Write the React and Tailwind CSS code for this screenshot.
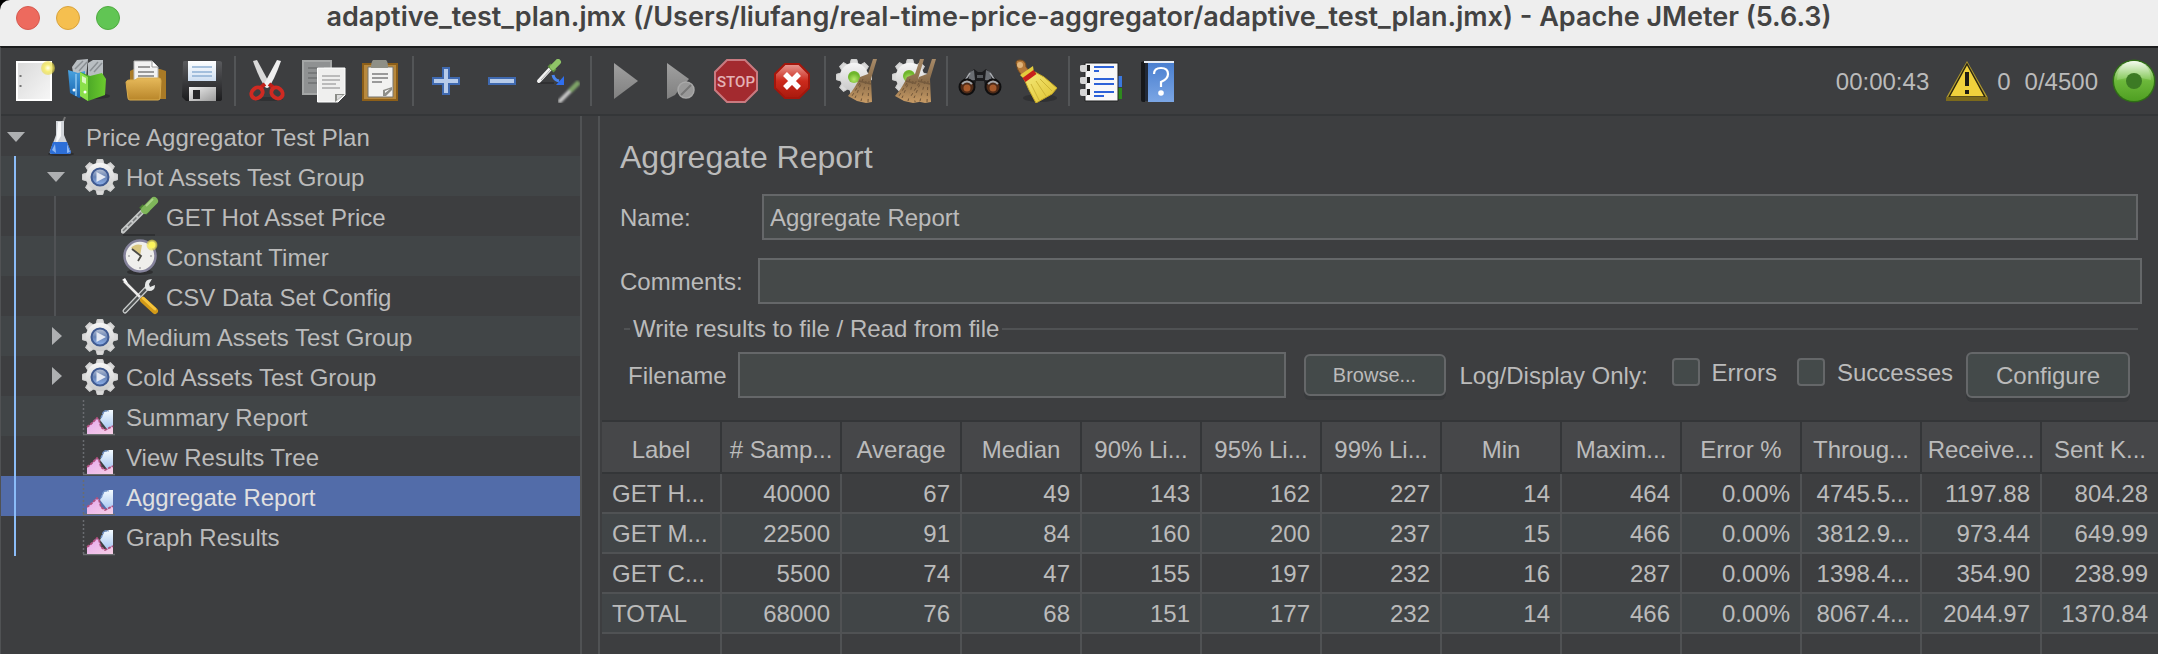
import React from "react";

const TEETH = [0, 45, 90, 135, 180, 225, 270, 315];

function Gradient({ id, from, to, mid, x2 = 0, y2 = 1 }) {
  return (
    <linearGradient id={id} x1="0" y1="0" x2={x2} y2={y2}>
      <stop offset="0" stopColor={from} />
      {mid && <stop offset="0.5" stopColor={mid} />}
      <stop offset="1" stopColor={to} />
    </linearGradient>
  );
}

function SharedGradients() {
  return (
    <svg width="0" height="0" className="absolute" aria-hidden="true">
      <defs>
        <Gradient id="paper" from="#dadada" to="#f6f6f6" x2={1} />
        <Gradient id="gear" from="#f6f6f6" to="#c9c9c9" />
        <Gradient id="blueFolder" from="#4aa3e0" to="#1763ae" />
        <Gradient id="greenFolder" from="#3f9a24" to="#6ccb2e" x2={1} y2={0} />
        <Gradient id="yellowFolder" from="#e6b95a" to="#b9862a" />
        <Gradient id="label" from="#ffffff" to="#cfdff2" />
        <Gradient id="metal" from="#f0f0f0" to="#9a9a9a" x2={1} />
        <Gradient id="disk" from="#5a5b5e" to="#1c1c1e" />
        <Gradient id="redGloss" from="#e89a93" mid="#cc2a1c" to="#a81a0e" />
        <Gradient id="straw" from="#a78a68" mid="#8a6c49" to="#c99c66" />
        <Gradient id="yellowStraw" from="#f4ea7a" to="#e0c22e" x2={1} />
        <Gradient id="playGrey" from="#a0a0a0" to="#808080" />
        <Gradient id="book" from="#4a7fd0" to="#7ba6e4" />
        <Gradient id="orb" from="#dff2d0" mid="#6cb83a" to="#4f9f22" />
        <Gradient id="shine" from="#f4fbef" to="#86c95a" />
        <Gradient id="peak" from="#e6a9ee" to="#f6cfe6" x2={1} />
        <Gradient id="peakBlue" from="#f4fbff" to="#a9c8f2" />
        <Gradient id="blueDot" from="#b9c2d4" mid="#6783b4" to="#8fb2ee" />
        <radialGradient id="star">
          <stop offset="0" stopColor="#fffff0" />
          <stop offset="0.5" stopColor="#f6ee7a" />
          <stop offset="1" stopColor="#e8d83a" stopOpacity="0.5" />
        </radialGradient>
        <radialGradient id="greenDot" cy="0.7">
          <stop offset="0" stopColor="#b6e86a" />
          <stop offset="1" stopColor="#6fb62c" />
        </radialGradient>
        <filter id="soft">
          <feGaussianBlur stdDeviation="1" />
        </filter>
      </defs>
    </svg>
  );
}

function Svg({ size = 44, children }) {
  return (
    <svg width={size} height={size} viewBox={`0 0 ${size} ${size}`} fill="none" aria-hidden="true" className="shrink-0">
      {children}
    </svg>
  );
}

function GearShape({ cx, cy, r }) {
  return (
    <g>
      {TEETH.map((a) => (
        <path
          key={a}
          d={`M${cx - r * 0.26} ${cy - r * 0.6}L${cx - r * 0.16} ${cy - r}H${cx + r * 0.16}L${cx + r * 0.26} ${cy - r * 0.6}Z`}
          transform={`rotate(${a} ${cx} ${cy})`}
          fill="#dadada"
          stroke="#cfcfcf"
          strokeWidth="1"
        />
      ))}
      <circle cx={cx} cy={cy} r={r * 0.81} fill="url(#gear)" />
    </g>
  );
}

function NewIcon() {
  return (
    <Svg>
      <path d="M4 2H40V42H4Z" fill="#fff" />
      <path d="M6 4H38V40H6Z" fill="url(#paper)" />
      <path d="M8.500 16v2M8.500 26v2" stroke="#777" strokeWidth="2" />
      <circle cx="36" cy="9" r="7" fill="url(#star)" />
    </Svg>
  );
}

function TemplatesIcon() {
  return (
    <Svg>
      <ellipse cx="28" cy="37" rx="14" ry="3" fill="#2e2f31" />
      <path d="M4 8L9 1L20 0L18 18L6 18ZM20 4L25 1H35V16L20 18Z" fill="#b9bec2" />
      <path d="M7 10l8-8M11 12l8-9M22 12l8-9M26 13l8-9" stroke="#8b9094" strokeWidth="1.500" />
      <path d="M0 11L10 14L17 12V36L11 39L2 34Z" fill="url(#blueFolder)" />
      <path d="M8 15V37" stroke="#8cc6f0" strokeWidth="1.500" />
      <path d="M12 13L22 17L34 14L38 20L37 36L20 42L12 37Z" fill="url(#greenFolder)" />
      <path d="M12 13L20 18V42L12 37Z" fill="#8be04a" />
      <path d="M14 17l4 2v6l-4-2Z" fill="#d9f7c0" />
      <circle cx="17" cy="33" r="1.500" fill="#fff" />
      <circle cx="6" cy="31" r="1.500" fill="#fff" />
    </Svg>
  );
}

function OpenIcon() {
  return (
    <Svg>
      <path d="M6 12L10 10H36L42 12V40H6Z" fill="#a97a26" />
      <path d="M10 2H28L34 8V26H10Z" fill="#f2f2f2" stroke="#b5b5b5" />
      <path d="M28 2V8H34" stroke="#999" fill="#fff" />
      <path d="M14 8H26M14 13H30M14 17H30" stroke="#9a9a9a" strokeWidth="2" />
      <path d="M2 23Q3 21 5 21H11L14 19H35Q37 19 37 22L36 39Q36 41 34 41H6Q4 41 4 39Z" fill="url(#yellowFolder)" stroke="#d9ac4e" />
    </Svg>
  );
}

function SaveIcon() {
  return (
    <Svg>
      <path d="M3 3Q3 2 5 2H39Q42 2 42 4V40Q42 42 39 42H6L2 38Z" fill="url(#disk)" />
      <path d="M8 2H36V22H8Z" fill="url(#label)" />
      <path d="M12 8H32M12 13H32M12 17H32" stroke="#8fb0d4" strokeWidth="1.500" />
      <path d="M9 28H36V42H9Z" fill="url(#metal)" />
      <path d="M13 31H20V40H13Z" fill="#28282a" />
    </Svg>
  );
}

function CutIcon() {
  return (
    <Svg>
      <ellipse cx="22" cy="40" rx="15" ry="2" fill="#303133" />
      <path d="M7 2L11 1L25 27L20 29Q14 22 7 2Z" fill="#d9d9d9" />
      <path d="M35 2L31 1L17 27L22 29Q28 22 35 2Z" fill="#efefef" />
      <path d="M19 25L14 29M23 25L28 29" stroke="#c01f18" strokeWidth="4" />
      <ellipse cx="11" cy="34" rx="6" ry="5" transform="rotate(-40 11 34)" stroke="#cf2a22" strokeWidth="4" />
      <ellipse cx="31" cy="34" rx="6" ry="5" transform="rotate(40 31 34)" stroke="#cf2a22" strokeWidth="4" />
    </Svg>
  );
}

function CopyIcon() {
  return (
    <Svg>
      <path d="M1 2H29V35H1Z" fill="#8f9192" stroke="#a4a6a6" strokeWidth="2" />
      <path d="M6 9H22M6 14H18M6 19H18M6 24H18" stroke="#77797a" strokeWidth="2" />
      <path d="M15.500 9H43V36L36 43H15.500Z" fill="#efefee" stroke="#fff" strokeWidth="1" />
      <path d="M20 17H38M20 21H38M20 25H34M20 29H38" stroke="#aaa" strokeWidth="1.500" />
      <path d="M33 43V35H43Z" fill="#8b8d88" />
      <path d="M35 41V36H41Z" fill="#dcdcdc" />
    </Svg>
  );
}

function PasteIcon() {
  return (
    <Svg>
      <path d="M5 5H39V41H5Z" fill="#b8893e" stroke="#8d5f19" strokeWidth="2" />
      <path d="M10 8H35V38H10Z" fill="#f2f2f1" stroke="#77746c" />
      <path d="M15 1H28Q30 2 30 9H13Q13 3 15 1Z" fill="#8e8f86" />
      <path d="M14 15H30M14 19H30M14 23H24" stroke="#9a9a9a" strokeWidth="2" />
      <path d="M25 37V31L34 28V31L28 37Z" fill="#8f8f8a" />
      <path d="M27 34V32L32 30Z" fill="#fff" />
    </Svg>
  );
}

function PlusIcon() {
  return (
    <Svg>
      <path d="M19 9H25V19H35V25H25V35H19V25H9V19H19Z" fill="#b7cbea" stroke="#3f69b0" strokeWidth="2" />
    </Svg>
  );
}

function MinusIcon() {
  return (
    <Svg>
      <path d="M9 19H35V25H9Z" fill="#b7cbea" stroke="#3f69b0" strokeWidth="2" />
    </Svg>
  );
}

function ToggleIcon() {
  return (
    <Svg>
      <path d="M2 24H18" stroke="#2c2c2e" strokeWidth="1.500" />
      <path d="M3 22L15 9" stroke="#f2f2f2" strokeWidth="4" strokeLinecap="round" />
      <path d="M5 21L15 10" stroke="#a8a8a8" strokeWidth="1" />
      <path d="M13 6L19 12" stroke="#5d8f3e" strokeWidth="4" />
      <path d="M17 8L22 3" stroke="#8fc467" strokeWidth="6" strokeLinecap="round" />
      <path d="M17 16Q18 21 23 22" stroke="#4a86f2" strokeWidth="3" />
      <path d="M20 26H28V17Z" fill="#2f6fee" />
      <g filter="url(#soft)">
        <path d="M24 42L34 32" stroke="#c4c4c4" strokeWidth="4" strokeLinecap="round" />
        <path d="M34 32L43 23" stroke="#7fa467" strokeWidth="5" />
      </g>
    </Svg>
  );
}

function PlayIcon() {
  return (
    <Svg>
      <path d="M12 4L36 22L12 40Z" fill="url(#playGrey)" />
    </Svg>
  );
}

function PlayNoTimersIcon() {
  return (
    <Svg>
      <path d="M9 4L31 20L20 32L17 36L9 40Z" fill="url(#playGrey)" />
      <circle cx="28" cy="31" r="8" fill="#999" stroke="#a8a8a8" strokeWidth="1.500" />
      <path d="M23 36L33 26" stroke="#777" strokeWidth="2" />
    </Svg>
  );
}

function StopIcon() {
  return (
    <Svg>
      <path d="M13 1H31L43 13V31L31 43H13L1 31V13Z" fill="#a32a2f" stroke="#c97a80" strokeWidth="2" />
      <text x="22" y="28" textAnchor="middle" fill="#e3b2b5" fontSize="15" fontWeight="500" fontFamily="Roboto, sans-serif">
        STOP
      </text>
    </Svg>
  );
}

function ShutdownIcon() {
  return (
    <Svg>
      <path d="M15 5H29L39 15V29L29 39H15L5 29V15Z" fill="url(#redGloss)" stroke="#a3160c" strokeWidth="2" />
      <path d="M15 15L29 29M29 15L15 29" stroke="#fff" strokeWidth="5.500" />
    </Svg>
  );
}

function StrawBroom({ x }) {
  return (
    <g transform={`translate(${x} 0)`}>
      <path d="M36 0H40L37 10L34 20L35 43L29 44L20 42L11 37Q19 28 23 18L31 15Z" fill="url(#straw)" />
      <path d="M26 20L18 39M29 22L24 42M32 22L31 43M23 24L15 37" stroke="#6f5438" strokeWidth="1" strokeDasharray="3 3" />
      <path d="M22 22L34 25" stroke="#755b3e" strokeWidth="1.500" />
    </g>
  );
}

function ClearIcon() {
  return (
    <Svg>
      <GearShape cx={18} cy={18} r={17.5} />
      <circle cx="18" cy="18" r="6" fill="url(#greenDot)" />
      <StrawBroom x={1} />
    </Svg>
  );
}

function ClearAllIcon() {
  return (
    <Svg>
      <GearShape cx={18} cy={18} r={17.5} />
      <circle cx="17" cy="17" r="6" fill="url(#greenDot)" />
      <StrawBroom x={-8} />
      <StrawBroom x={4} />
    </Svg>
  );
}

function SearchIcon() {
  return (
    <Svg>
      <path d="M12 14L16 10L20 13H24L28 10L32 14L40 22L42 30L36 35L28 32L26 22H18L16 32L8 35L2 30L4 22Z" fill="#1c1c1e" />
      <path d="M12 13L16 11L17 21L10 22ZM32 13L28 11L27 21L34 22Z" fill="#6b6e73" />
      <path d="M6 23L12 14M38 23L32 14" stroke="#a8abb0" strokeWidth="1.500" />
      <path d="M19 16H25V19H19Z" fill="#55585c" />
      <circle cx="9" cy="28" r="7.500" fill="#4e2a17" stroke="#0f0f10" strokeWidth="2" />
      <circle cx="35" cy="28" r="7.500" fill="#4e2a17" stroke="#0f0f10" strokeWidth="2" />
      <path d="M4 25Q9 20 14 25M30 25Q35 20 40 25" stroke="#a4a7aa" strokeWidth="2" />
      <circle cx="9" cy="29" r="3.500" fill="#a5592b" />
      <circle cx="35" cy="29" r="3.500" fill="#a5592b" />
    </Svg>
  );
}

function ResetSearchIcon() {
  return (
    <Svg>
      <ellipse cx="26" cy="39" rx="17" ry="4" fill="#303133" />
      <path d="M3 7Q0 1 6 1Q12 1 12 8L17 14L10 18Q3 12 3 7Z" fill="#b5793a" stroke="#7d4f1e" />
      <circle cx="6" cy="6" r="3" fill="#e0b47a" />
      <path d="M6 16L19 7L20 14L10 20Z" fill="#e3cc3d" />
      <path d="M10 20L21 13L30 18L43 29L38 35L22 44L15 31Z" fill="url(#yellowStraw)" stroke="#c3a526" />
      <path d="M17 25L25 41M22 22L32 37M26 20L38 32" stroke="#cdb436" strokeWidth="1" />
      <path d="M10 21L21 13" stroke="#c8201c" strokeWidth="5" />
    </Svg>
  );
}

function FunctionHelperIcon() {
  return (
    <Svg>
      <path d="M38 17H42V28H38Z" fill="#3a78e0" />
      <path d="M38 29H42V40H38Z" fill="#2e8a1e" />
      <path d="M5 4H38V42H5Z" fill="#f8f8f8" stroke="#222" strokeWidth="1" />
      <path d="M14 8H34M14 12H19M14 20H34M14 25H34M14 33H34M14 37H24" stroke="#2d62d8" strokeWidth="2" />
      {[8, 20, 32].map((y) => (
        <g key={y}>
          <path d={`M0 ${y - 1}Q0 ${y - 2} 2 ${y - 2}H7V${y + 5}H2Q0 ${y + 5} 0 ${y + 3}Z`} fill="#d5d5d5" />
          <path d={`M7 ${y - 2}H10V${y + 4}H7Z`} fill="#1c1c1c" />
        </g>
      ))}
    </Svg>
  );
}

function HelpIcon() {
  return (
    <Svg>
      <path d="M5 3L9 2V43H7Q5 43 5 41Z" fill="#17181a" />
      <path d="M8 2H38V4H8Z" fill="#e8edf5" />
      <path d="M9 4H12V42H9Z" fill="#222a38" />
      <path d="M12 4H38V43H12Z" fill="url(#book)" />
      <path d="M18 15Q18 9 25 9Q32 9 32 15Q32 20 25 23V28" stroke="#fff" strokeWidth="2.200" />
      <circle cx="25" cy="34" r="2.800" fill="#fff" />
    </Svg>
  );
}

function WarningIcon() {
  return (
    <Svg>
      <path d="M22 2L43 39V42H1V39Z" fill="#b09a2e" />
      <path d="M22 5L40 38H4Z" fill="#f0d13c" stroke="#2c2712" strokeWidth="1.500" />
      <path d="M22 13V27M22 31V35" stroke="#1e1c14" strokeWidth="4" />
      <path d="M1 40H43" stroke="#7c6a1c" strokeWidth="4" />
    </Svg>
  );
}

function RunningIcon() {
  return (
    <Svg>
      <circle cx="22" cy="22" r="21.500" fill="#2f6d16" />
      <circle cx="22" cy="22" r="20" fill="url(#orb)" />
      <path d="M5 21Q6 3 22 2Q38 3 39 21Q22 16 5 21Z" fill="url(#shine)" />
      <circle cx="22" cy="22" r="8" fill="#3c7a24" />
    </Svg>
  );
}

function FlaskIcon() {
  return (
    <Svg size={40}>
      <ellipse cx="20" cy="38" rx="13" ry="2" fill="#2c2d2f" />
      <path d="M22 6L24 1" stroke="#777" strokeWidth="2" />
      <path d="M15 5H23V19L30 36Q30 38 27 38H11Q8 38 9 35L15 19Z" fill="#d2d5da" />
      <path d="M17 6H20V20L15 28Z" fill="#f8f9fa" />
      <path d="M12 26H26L30 36Q30 38 27 38H11Q8 38 9 35Z" fill="#2d6fd8" />
      <path d="M11 34L14 28L15 37ZM26 28L29 36L26 37Z" fill="#8db7f4" />
    </Svg>
  );
}

function ThreadGroupIcon() {
  return (
    <Svg size={40}>
      <GearShape cx={19} cy={21} r={17.5} />
      <circle cx="19" cy="21" r="8.500" fill="url(#blueDot)" stroke="#3f5a92" strokeWidth="2" />
      <path d="M15.500 16L25 21L15.500 26Z" fill="#e4e9f3" />
    </Svg>
  );
}

function SamplerIcon() {
  return (
    <Svg size={40}>
      <path d="M2 39H34" stroke="#2f3032" strokeWidth="2" />
      <path d="M2 35L21 16" stroke="#c4c6c6" strokeWidth="5" strokeLinecap="round" />
      <path d="M2 35L21 16" stroke="#77797a" strokeWidth="1.500" strokeDasharray="5 2" />
      <path d="M20 10L27 17" stroke="#4b8232" strokeWidth="5" />
      <path d="M24 14L33 5" stroke="#7fb65a" strokeWidth="8" strokeLinecap="round" />
      <path d="M25 10L32 3" stroke="#a9d387" strokeWidth="2" />
    </Svg>
  );
}

function TimerIcon() {
  return (
    <Svg size={40}>
      <ellipse cx="19" cy="36" rx="13" ry="3" fill="#2e2f31" />
      <circle cx="19" cy="20" r="15.500" fill="#efefec" stroke="#85839c" strokeWidth="2.500" />
      <path d="M19 20L10 12Q14 7 21 9Z" fill="#d9c680" />
      <path d="M11 13L20 20L17 25" stroke="#4a4a44" strokeWidth="1.800" />
      <path d="M19 31v2M7 20h2M29 20h2" stroke="#aaa" strokeWidth="1.500" />
      <circle cx="31" cy="9" r="5.500" fill="url(#star)" />
      <circle cx="31" cy="9" r="3" fill="#fbf45a" />
    </Svg>
  );
}

function ConfigIcon() {
  return (
    <Svg size={40}>
      <path d="M4 35L25 13" stroke="#c9cccc" strokeWidth="5" strokeLinecap="round" />
      <path d="M4 35L25 13" stroke="#4c4f50" strokeWidth="2.500" strokeLinecap="round" />
      <path d="M31 3Q24 3 24 9Q23 14 28 15Q34 15 34 9L29 11L28 8Z" fill="#e6e8e8" />
      <path d="M3 5L19 21" stroke="#ecebea" strokeWidth="2.500" />
      <path d="M1 4L4 2L7 7Z" fill="#fff" />
      <path d="M22 24L34 35" stroke="#d39a18" strokeWidth="6" strokeLinecap="round" />
      <path d="M22 22L34 33" stroke="#f6c53c" strokeWidth="3" strokeLinecap="round" />
    </Svg>
  );
}

function ListenerIcon() {
  return (
    <Svg size={40}>
      <path d="M2.500 4V38" stroke="#6a6c70" strokeWidth="1.500" strokeDasharray="2 2" />
      <path d="M2 38.500H34" stroke="#6d6f72" strokeWidth="1.500" />
      <path d="M19 24L23 16L28 14H32V33L26 33Z" fill="url(#peakBlue)" />
      <path d="M20 22L23 15H28" stroke="#7396cc" strokeWidth="1.500" strokeDasharray="3 1" />
      <path d="M6 31L10 28L16 22L18 24L20 31L25 34L32 30V38H6Z" fill="url(#peak)" />
      <path d="M6 31L10 28L16 22L18 24L20 31L24 34L32 30" stroke="#b0507e" strokeWidth="1.800" strokeDasharray="3 1" />
    </Svg>
  );
}

const TOOLBAR = [
  [["New", NewIcon], ["Templates", TemplatesIcon], ["Open", OpenIcon], ["Save", SaveIcon]],
  [["Cut", CutIcon], ["Copy", CopyIcon], ["Paste", PasteIcon]],
  [["Expand All", PlusIcon], ["Collapse All", MinusIcon], ["Toggle", ToggleIcon]],
  [["Start", PlayIcon], ["Start no pauses", PlayNoTimersIcon], ["Stop", StopIcon], ["Shutdown", ShutdownIcon]],
  [["Clear", ClearIcon], ["Clear All", ClearAllIcon]],
  [["Search", SearchIcon], ["Reset Search", ResetSearchIcon]],
  [["Function Helper", FunctionHelperIcon], ["Help", HelpIcon]],
];

const TREE = [
  { label: "Price Aggregator Test Plan", depth: 0, icon: FlaskIcon, arrow: "down" },
  { label: "Hot Assets Test Group", depth: 1, icon: ThreadGroupIcon, arrow: "down" },
  { label: "GET Hot Asset Price", depth: 2, icon: SamplerIcon },
  { label: "Constant Timer", depth: 2, icon: TimerIcon },
  { label: "CSV Data Set Config", depth: 2, icon: ConfigIcon },
  { label: "Medium Assets Test Group", depth: 1, icon: ThreadGroupIcon, arrow: "right" },
  { label: "Cold Assets Test Group", depth: 1, icon: ThreadGroupIcon, arrow: "right" },
  { label: "Summary Report", depth: 1, icon: ListenerIcon },
  { label: "View Results Tree", depth: 1, icon: ListenerIcon },
  { label: "Aggregate Report", depth: 1, icon: ListenerIcon, selected: true },
  { label: "Graph Results", depth: 1, icon: ListenerIcon },
];

const COLUMNS = ["Label", "# Samp...", "Average", "Median", "90% Li...", "95% Li...", "99% Li...", "Min", "Maxim...", "Error %", "Throug...", "Receive...", "Sent K..."];

const ROWS = [
  ["GET H...", "40000", "67", "49", "143", "162", "227", "14", "464", "0.00%", "4745.5...", "1197.88", "804.28"],
  ["GET M...", "22500", "91", "84", "160", "200", "237", "15", "466", "0.00%", "3812.9...", "973.44", "649.99"],
  ["GET C...", "5500", "74", "47", "155", "197", "232", "16", "287", "0.00%", "1398.4...", "354.90", "238.99"],
  ["TOTAL", "68000", "76", "68", "151", "177", "232", "14", "466", "0.00%", "8067.4...", "2044.97", "1370.84"],
];

function TitleBar() {
  return (
    <header className="relative flex h-[46px] shrink-0 items-start justify-center rounded-tl-[10px] bg-[#eeeeee]">
      <div className="absolute left-4 top-1.5 flex gap-4">
        <button aria-label="Close" className="size-6 rounded-full border border-[#d65a50] bg-[#ed6a5e]" />
        <button aria-label="Minimize" className="size-6 rounded-full border border-[#d9a33c] bg-[#f5bf4f]" />
        <button aria-label="Zoom" className="size-6 rounded-full border border-[#4fab40] bg-[#61c554]" />
      </div>
      <h1 className="whitespace-nowrap font-['Inter',sans-serif] text-[27px] font-semibold leading-[34px] text-[#434343]">
        adaptive_test_plan.jmx (/Users/liufang/real-time-price-aggregator/adaptive_test_plan.jmx) - Apache JMeter (5.6.3)
      </h1>
    </header>
  );
}

function Toolbar() {
  return (
    <div role="toolbar" className="flex h-[68px] shrink-0 items-center justify-between border-b-2 border-[#343638] pl-[5px]">
      <div className="flex items-center">
        {TOOLBAR.map((group, g) => (
          <React.Fragment key={g}>
            {g > 0 && (
              <div className="flex w-[10px] justify-center">
                <div className="h-[50px] w-[2px] bg-[#535557]" />
              </div>
            )}
            {group.map(([name, Icon]) => (
              <button key={name} aria-label={name} className="flex h-14 w-14 items-center justify-center">
                <Icon />
              </button>
            ))}
          </React.Fragment>
        ))}
      </div>
      <div className="flex items-center pr-[2px]">
        <span className="pt-0.5">00:00:43</span>
        <button aria-label="Show log" className="ml-4 flex">
          <WarningIcon />
        </button>
        <span className="ml-2 pt-0.5">0</span>
        <span className="ml-[14px] pt-0.5">0/4500</span>
        <span className="ml-[14px] flex">
          <RunningIcon />
        </span>
      </div>
    </div>
  );
}

function Arrow({ direction }) {
  return (
    <svg width="18" height="18" viewBox="0 0 18 18" aria-hidden="true" fill="#aeb0b2">
      {direction === "down" ? <path d="M0 5H18L9 15Z" /> : <path d="M5 0V18L15 9Z" />}
    </svg>
  );
}

function TreeRow({ item, index }) {
  const Icon = item.icon;
  const tone = item.selected ? "bg-[#526ca9] text-[#e0e0e0]" : index % 2 ? "bg-[#414547]" : "";
  return (
    <li role="treeitem" aria-selected={!!item.selected} className={`flex h-10 items-center whitespace-nowrap ${tone}`}>
      {item.depth > 0 && (
        <div className="h-full w-10 shrink-0 pl-[13px]">
          <div className="h-full w-[2px] bg-[#8bbcf8]" />
        </div>
      )}
      {item.depth > 1 && (
        <div className="h-full w-10 shrink-0 pl-[13px]">
          <div className="h-full w-[2px] bg-[#505255]" />
        </div>
      )}
      <div className="w-10 shrink-0 pl-1.5">{item.arrow && <Arrow direction={item.arrow} />}</div>
      <Icon />
      <span className="ml-[5px] pt-1">{item.label}</span>
    </li>
  );
}

function TextField({ id, label, value, labelClass }) {
  return (
    <>
      <label htmlFor={id} className={`pt-0.5 ${labelClass}`}>
        {label}
      </label>
      <input
        id={id}
        type="text"
        defaultValue={value}
        className="h-[46px] min-w-0 flex-1 border-2 border-[#656769] bg-[#454949] px-1.5 pt-0.5 outline-none"
      />
    </>
  );
}

function Check({ id, label }) {
  return (
    <div className="flex items-center gap-3">
      <input id={id} type="checkbox" className="size-7 appearance-none rounded-[4px] border-2 border-[#656769] bg-[#444a4a]" />
      <label htmlFor={id} className="pt-0.5">
        {label}
      </label>
    </div>
  );
}

function ResultsFile() {
  return (
    <fieldset className="mx-1 mt-[9px] min-w-0">
      <legend className="flex w-full items-center gap-[3px] leading-8">
        <span className="h-[2px] w-[6px] bg-[#505254]" />
        <span className="whitespace-nowrap">Write results to file / Read from file</span>
        <span className="h-[2px] flex-1 bg-[#505254]" />
      </legend>
      <div className="mt-[7px] flex items-center whitespace-nowrap pl-1 pr-2">
        <TextField id="filename" label="Filename" value="" labelClass="mr-[11px]" />
        <button className="ml-[18px] h-[42px] w-[142px] rounded-md border-2 border-[#656769] bg-[#444a4a] text-[20px] shadow-[0_4px_0_#37393b]">
          Browse...
        </button>
        <span className="ml-[14px] pt-0.5">Log/Display Only:</span>
        <div className="ml-6 mr-[13px] flex gap-5 pb-1.5">
          <Check id="errors" label="Errors" />
          <Check id="successes" label="Successes" />
        </div>
        <button className="h-[46px] w-[164px] rounded-md border-2 border-[#656769] bg-[#444a4a] pt-0.5 shadow-[0_4px_0_#37393b]">
          Configure
        </button>
      </div>
    </fieldset>
  );
}

function ReportTable() {
  return (
    <table className="mt-[22px] w-full table-fixed border-separate border-spacing-0 whitespace-nowrap border-t-2 border-[#343638]">
      <colgroup>
        {COLUMNS.map((name, i) => (
          <col key={name} className={i < COLUMNS.length - 1 ? "w-[120px]" : ""} />
        ))}
      </colgroup>
      <thead>
        <tr className="h-[52px] bg-[#464749]">
          {COLUMNS.map((name) => (
            <th key={name} className="border-b-2 border-r-2 border-[#343638] p-0 pt-1.5 font-normal last:border-r-0">
              {name}
            </th>
          ))}
        </tr>
      </thead>
      <tbody>
        {ROWS.map((row) => (
          <tr key={row[0]} className="h-10 even:bg-[#414547]">
            {row.map((cell, i) => (
              <td key={i} className="border-b-2 border-r-2 border-[#505254] px-[10px] pb-0 pt-0.5 text-right first:text-left last:border-r-0">
                {cell}
              </td>
            ))}
          </tr>
        ))}
        <tr className="h-5">
          {COLUMNS.map((name) => (
            <td key={name} className="border-r-2 border-[#505254] p-0 last:border-r-0" />
          ))}
        </tr>
      </tbody>
    </table>
  );
}

export default function App() {
  return (
    <div className="flex min-h-screen flex-col bg-black font-['Liberation_Sans',Arial,sans-serif] text-[24px] leading-7 text-[#bbbbbb]">
      <SharedGradients />
      <TitleBar />
      <div className="flex flex-1 flex-col border-l border-t-2 border-l-[#505254] border-t-[#1c1d1e] bg-[#3d3e40]">
        <Toolbar />
        <div className="flex flex-1">
          <nav aria-label="Test plan" className="w-[579px] shrink-0">
            <ul role="tree">
              {TREE.map((item, i) => (
                <TreeRow key={item.label} item={item} index={i} />
              ))}
            </ul>
          </nav>
          <div className="w-5 shrink-0 border-x-2 border-[#505254]" />
          <main className="flex min-w-0 flex-1 flex-col">
            <div className="pl-5 pr-4">
              <h2 className="pt-[23px] text-[32px] leading-9">Aggregate Report</h2>
              <div className="mt-[19px] flex items-center pr-1">
                <TextField id="name" label="Name:" value="Aggregate Report" labelClass="w-[142px]" />
              </div>
              <div className="mt-[18px] flex items-center">
                <TextField id="comments" label="Comments:" value="" labelClass="w-[138px]" />
              </div>
              <ResultsFile />
            </div>
            <div className="pl-[2px]">
              <ReportTable />
            </div>
          </main>
        </div>
      </div>
    </div>
  );
}
